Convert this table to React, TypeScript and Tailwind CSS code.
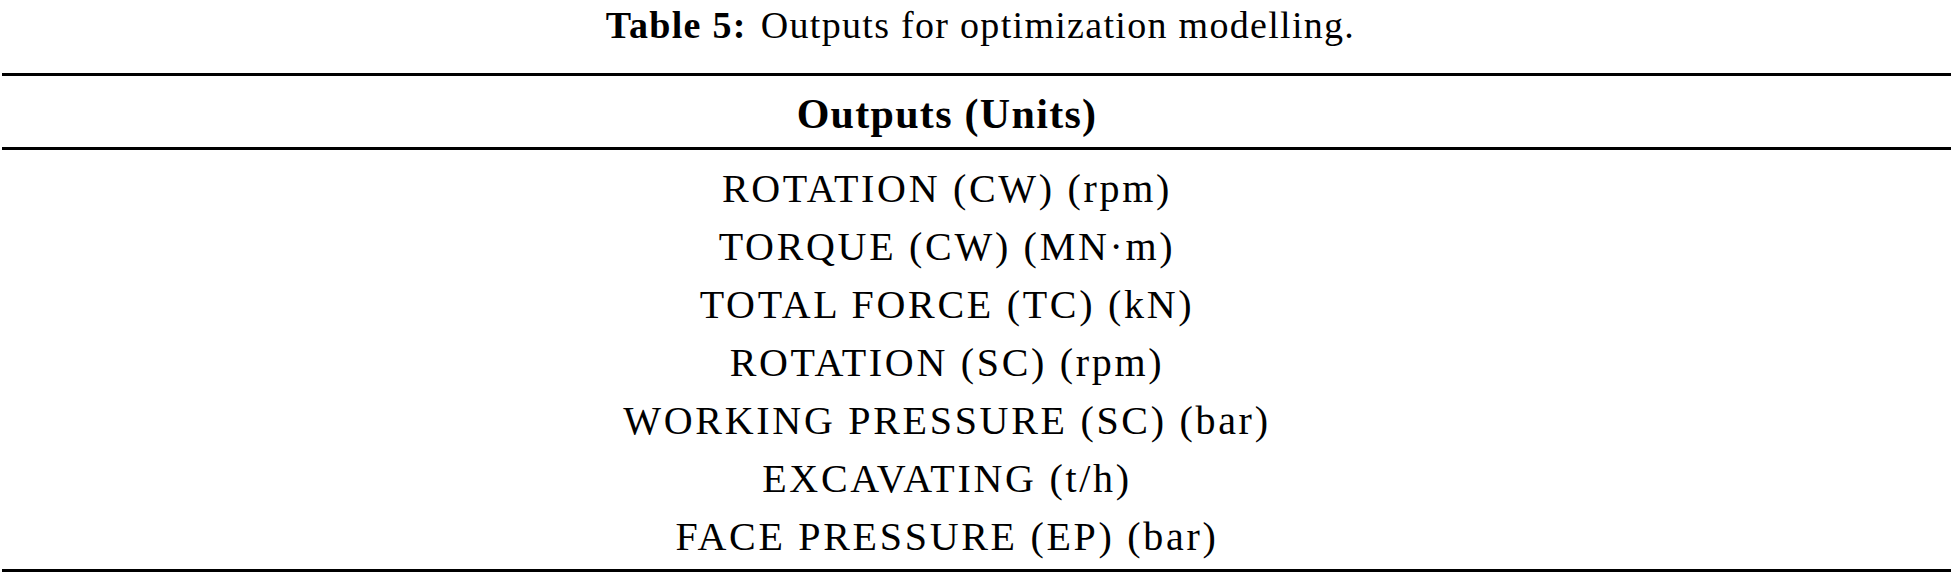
import React from "react";

const outputs = [
  "ROTATION (CW) (rpm)",
  "TORQUE (CW) (MN·m)",
  "TOTAL FORCE (TC) (kN)",
  "ROTATION (SC) (rpm)",
  "WORKING PRESSURE (SC) (bar)",
  "EXCAVATING (t/h)",
  "FACE PRESSURE (EP) (bar)",
];

export default function App() {
  return (
    <div className="w-[1953px] h-[574px] bg-white text-black font-['Liberation_Serif',serif] px-[2px]">
      {/* caption */}
      <p className="text-center text-[38px] leading-[38px] tracking-[1.3px] pl-[8px] pt-[6px]">
        <span className="font-bold">Table 5:</span>
        <span className="ml-[14px]">Outputs for optimization modelling.</span>
      </p>

      {/* table, column sits a bit left of the page centre */}
      <div className="mt-[29px] border-t-[3px] border-black">
        <div className="text-center font-bold text-[42px] leading-[52px] tracking-[1.3px] pt-[12px] pb-[7px] pr-[59px]">
          Outputs (Units)
        </div>
        <div className="border-t-[3px] border-black pt-[10px] pb-[3px] pr-[59px]">
          {outputs.map((row, i) => (
            <div
              key={i}
              className="text-center text-[40px] leading-[58px] tracking-[2.7px]"
            >
              {row}
            </div>
          ))}
        </div>
        <div className="border-t-[3px] border-black" />
      </div>
    </div>
  );
}
